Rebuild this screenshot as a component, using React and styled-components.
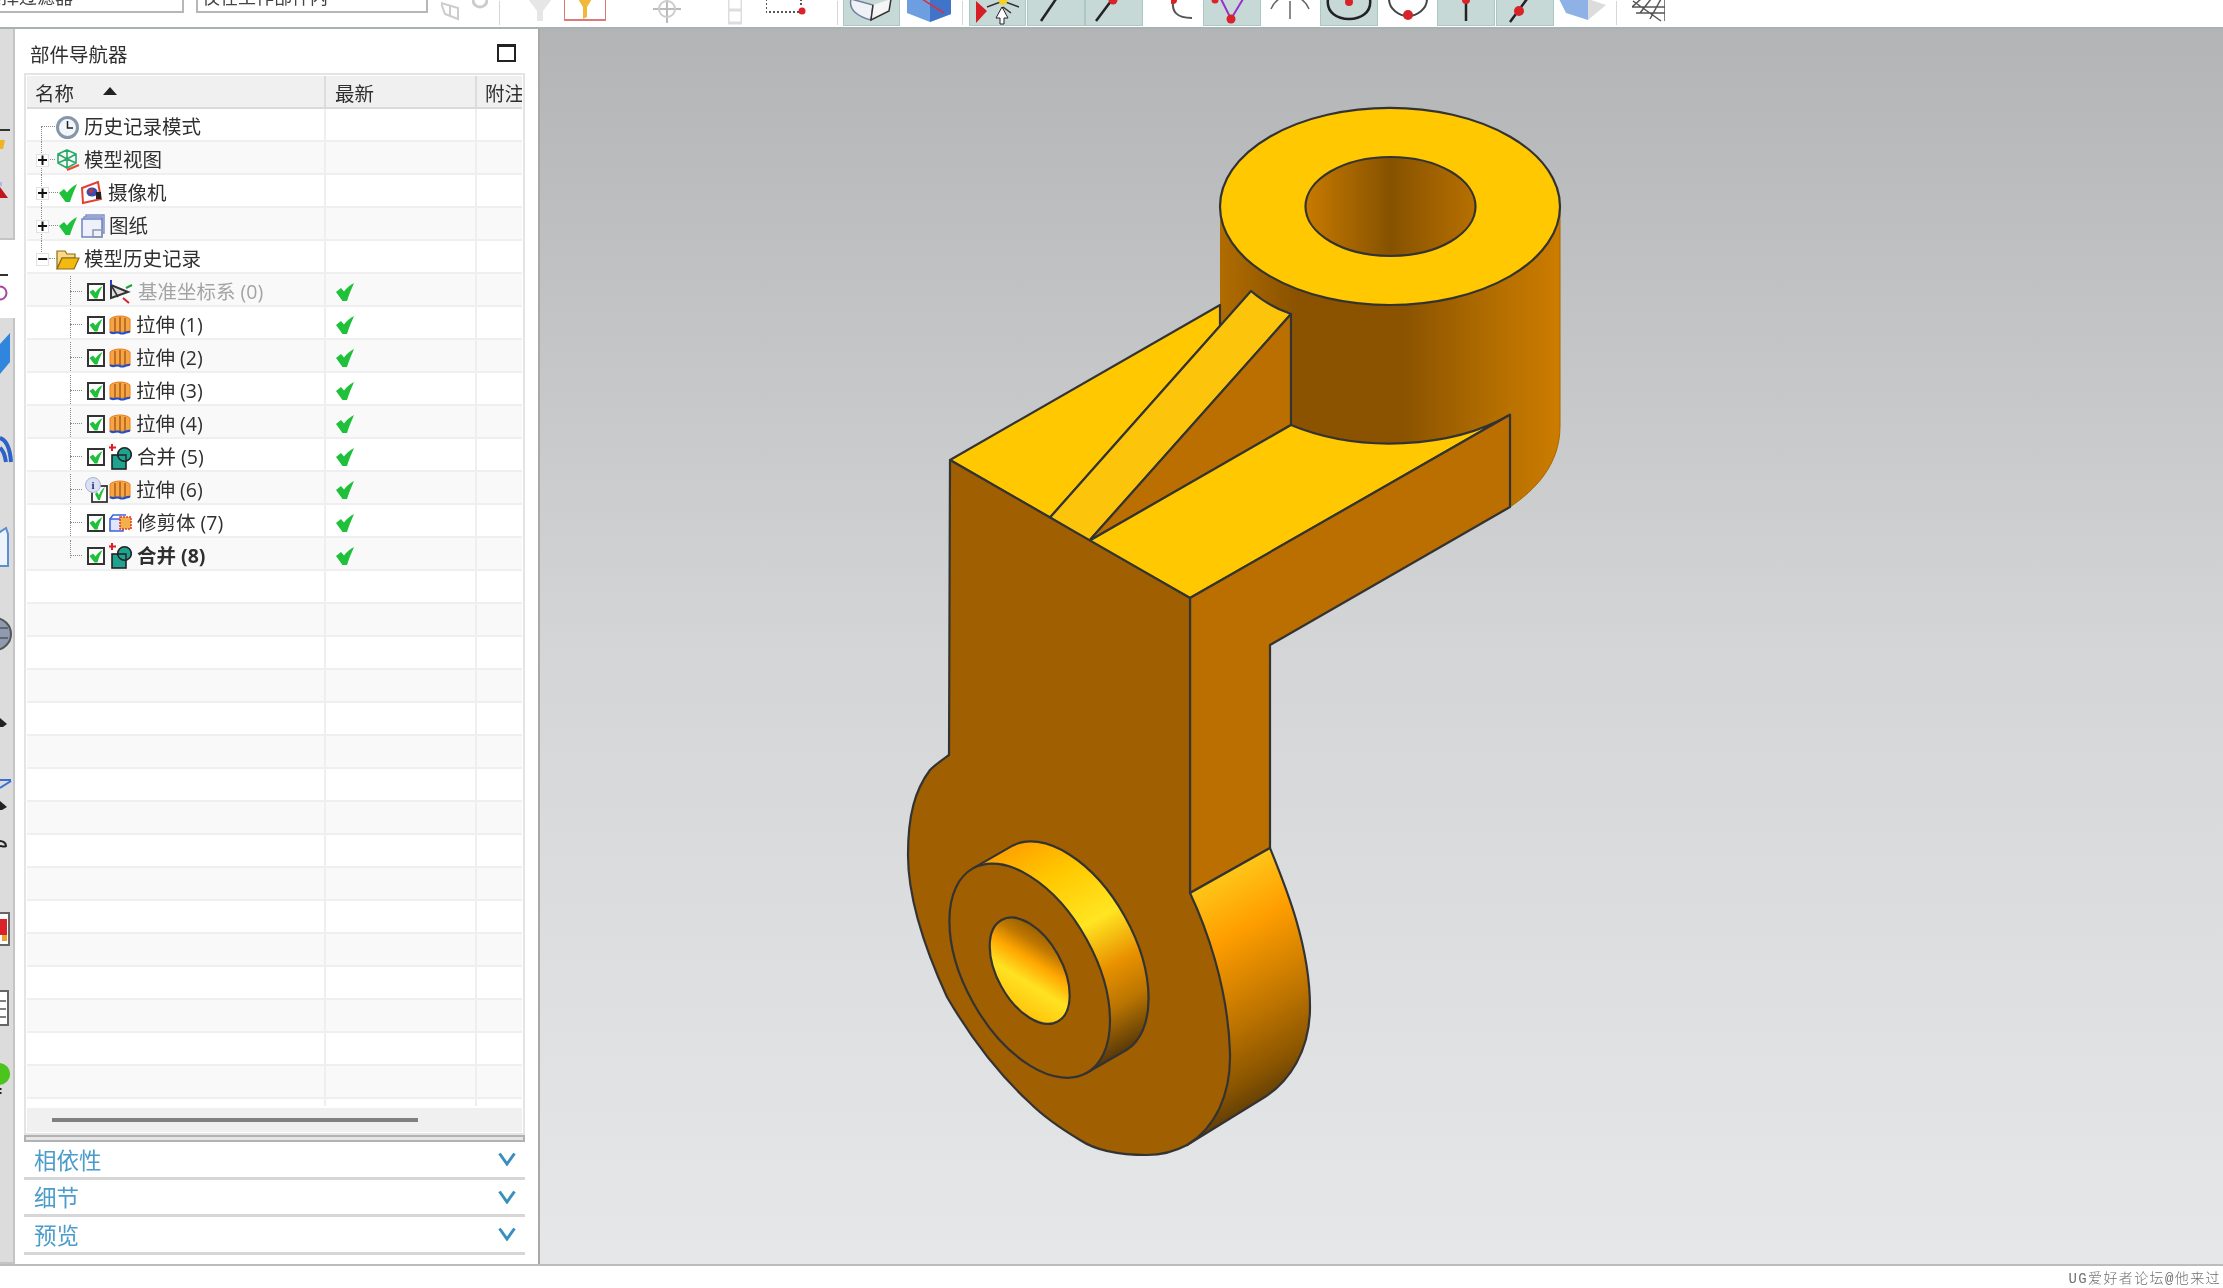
import React from "react";
import styled, { createGlobalStyle } from "styled-components";

const CJK = `"Open Sans", "Noto Sans CJK SC", sans-serif`;

const GlobalStyle = createGlobalStyle`
  html, body {
    margin: 0;
    padding: 0;
    background: #fff;
    overflow: hidden;
  }
  * {
    box-sizing: border-box;
  }
`;

const Page = styled.div`
  width: 2223px;
  height: 1288px;
  display: flex;
  flex-direction: column;
  overflow: hidden;
  font-family: ${CJK};
  background: #fff;
  filter: blur(0.45px);
`;

/* ---------- top toolbar, cut off by the top of the picture ---------- */

const Toolbar = styled.div`
  height: 29px;
  flex: none;
  display: flex;
  align-items: flex-end;
  background: #fff;
  border-bottom: 2px solid #a7b3b3;
  overflow: hidden;
`;

const Combo = styled.div`
  flex: none;
  width: ${(p) => p.$w}px;
  height: 34px;
  margin-left: ${(p) => p.$ml}px;
  margin-bottom: 14px;
  padding: 0 10px 0 4px;
  display: flex;
  align-items: center;
  justify-content: space-between;
  border: 2px solid #b4b8b8;
  background: #fff;
  color: #444;
  font-size: 18px;
  white-space: nowrap;
`;

const ComboCaret = styled.span`
  width: 0;
  height: 0;
  border-left: 4px solid transparent;
  border-right: 4px solid transparent;
  border-top: 4px solid #777;
`;

const ToolButton = styled.div`
  flex: none;
  width: ${(p) => p.$w}px;
  height: 26px;
  margin-left: ${(p) => p.$ml}px;
  margin-bottom: 1px;
  background: ${(p) => (p.$on ? "#c7d9d6" : "transparent")};
  border: 1px solid ${(p) => (p.$on ? "#adc8c4" : "transparent")};
  border-top: none;
  overflow: hidden;
  display: flex;
  justify-content: center;
  align-items: flex-end;
  svg {
    display: block;
    flex: none;
  }
`;

const ToolSep = styled.div`
  flex: none;
  width: 1px;
  height: 24px;
  margin-left: ${(p) => p.$ml}px;
  margin-bottom: 2px;
  background: #d6d6d6;
`;

const Glyph = ({ w, children }) => (
  <svg width={w} height="26" viewBox={`0 0 ${w} 26`} fill="none">
    {children}
  </svg>
);

const toolItems = [
  { w: 26, ml: 12, draw: <Glyph w={26}><path d="M1 4 18 9V20L5 15Z M10 7V18" stroke="#ccc" strokeWidth="2" /></Glyph> },
  { w: 18, ml: 5, draw: <Glyph w={18}><circle cx="9" cy="1" r="7" stroke="#ccc" strokeWidth="3" /></Glyph> },
  { sep: true, ml: 10 },
  { w: 26, ml: 27, draw: <Glyph w={26}><path d="M1 0H25L16 12V22H10V12Z" fill="#e6e6e6" /></Glyph> },
  { w: 44, ml: 10, draw: <Glyph w={44}><path d="M1 0V21H43V0" stroke="#dc7a7a" strokeWidth="2" /><path d="M15 0H29L24 8V18L20 20V8Z" fill="#f0b93a" /></Glyph> },
  { w: 36, ml: 42, draw: <Glyph w={36}><path d="M18 0V24M4 10H32" stroke="#bbb" strokeWidth="2" /><circle cx="18" cy="10" r="8" stroke="#ccc" strokeWidth="2" /></Glyph> },
  { w: 16, ml: 42, draw: <Glyph w={16}><path d="M1 0V24H15V0M1 11H15" stroke="#ddd" strokeWidth="3" /></Glyph> },
  { w: 42, ml: 22, draw: <Glyph w={42}><path d="M1 0V13H36M36 0V8" stroke="#555" strokeWidth="2" strokeDasharray="2 2" /><circle cx="37" cy="12" r="3.5" fill="#d8232a" /></Glyph> },
  { sep: true, ml: 30 },
  { w: 57, ml: 5, on: true, draw: <Glyph w={57}><path d="M8 0 C6 8 10 16 28 21 L30 6 Z" fill="#eef1f6" stroke="#6f7f9f" strokeWidth="1.5" /><path d="M30 6 28 21 46 12 48 0" fill="#f5f5f5" stroke="#333" strokeWidth="1.5" /></Glyph> },
  { w: 46, ml: 6, draw: <Glyph w={46}><path d="M1 0H45V15L24 23 1 14Z" fill="#6d9fe0" /><path d="M24 0H45V15L24 23Z" fill="#3f74c8" /><path d="M16 0 38 14" stroke="#d8323a" strokeWidth="1.5" /></Glyph> },
  { sep: true, ml: 10 },
  { w: 57, ml: 6, on: true, draw: <Glyph w={57}><path d="M7 2 18 12 7 24Z" fill="#d41f26" /><path d="M18 8 34 2 50 8M34 8 30 16M34 8 42 14" stroke="#333" strokeWidth="1.5" /><circle cx="34" cy="2" r="4" fill="#f5d21f" /><path d="M33 8 39 19H35V25H31V19H27Z" fill="#fff" stroke="#222" /></Glyph> },
  { w: 58, ml: 1, on: true, draw: <Glyph w={58}><path d="M14 22 29 0" stroke="#222" strokeWidth="2.5" /></Glyph> },
  { w: 58, ml: 0, on: true, draw: <Glyph w={58}><path d="M11 22 26 2" stroke="#222" strokeWidth="2.5" /><circle cx="28" cy="1" r="4.5" fill="#d8232a" /></Glyph> },
  { w: 24, ml: 27, draw: <Glyph w={24}><path d="M3 3C2 12 6 19 22 19" stroke="#555" strokeWidth="2" /><circle cx="3" cy="1" r="4" fill="#d8232a" /></Glyph> },
  { w: 58, ml: 9, on: true, draw: <Glyph w={58}><path d="M18 0 28 20 40 0" stroke="#9a2fc9" strokeWidth="2" /><circle cx="28" cy="20" r="4.5" fill="#d8232a" /><circle cx="12" cy="1" r="3.5" fill="#d8232a" /></Glyph> },
  { w: 46, ml: 6, draw: <Glyph w={46}><path d="M23 2V20M4 10C6 5 9 2 12 0M42 10C40 5 37 2 34 0" stroke="#666" strokeWidth="1.5" /></Glyph> },
  { w: 58, ml: 7, on: true, draw: <Glyph w={58}><path d="M8 0C6 14 18 20 29 20C40 20 52 14 50 0" stroke="#222" strokeWidth="2.5" /><circle cx="29" cy="3" r="4" fill="#d8232a" /></Glyph> },
  { w: 46, ml: 7, draw: <Glyph w={46}><path d="M4 0C4 10 14 17 23 17C32 17 42 10 42 0" stroke="#444" strokeWidth="2" /><circle cx="23" cy="16" r="5" fill="#d8232a" /></Glyph> },
  { w: 58, ml: 6, on: true, draw: <Glyph w={58}><path d="M29 2V22" stroke="#222" strokeWidth="2.5" /><circle cx="29" cy="1" r="4" fill="#d8232a" /></Glyph> },
  { w: 58, ml: 1, on: true, draw: <Glyph w={58}><path d="M14 23 31 0" stroke="#222" strokeWidth="2.5" /><circle cx="23" cy="12" r="5" fill="#d8232a" /></Glyph> },
  { w: 49, ml: 4, draw: <Glyph w={49}><path d="M1 0H30L48 6 30 21Z" fill="#dcdcdc" /><path d="M1 0H30V21L8 14Z" fill="#8fb2e6" /></Glyph> },
  { sep: true, ml: 9 },
  { w: 35, ml: 14, draw: <Glyph w={35}><path d="M2 2 30 22M34 0V22M10 0 1 8M20 0 9 14M30 0 19 20M1 8 34 8M5 14 34 14" stroke="#555" strokeWidth="1.5" /></Glyph> },
];

/* ---------- narrow icon strip left of the navigator ---------- */

const Main = styled.div`
  flex: 1;
  min-height: 0;
  display: flex;
`;

const Strip = styled.div`
  width: 15px;
  flex: none;
  display: flex;
  flex-direction: column;
  background: #fff;
`;

const StripGroup = styled.div`
  flex: ${(p) => (p.$grow ? "1" : "none")};
  height: ${(p) => (p.$h ? `${p.$h}px` : "auto")};
  margin-top: ${(p) => p.$mt || 0}px;
  display: flex;
  flex-direction: column;
  background: #dcdcdc;
  border-right: 2px solid #c4c4c4;
  border-bottom: 2px solid #c4c4c4;
  overflow: hidden;
`;

const StripSlot = styled.div`
  flex: none;
  margin-top: ${(p) => p.$mt}px;
  svg {
    display: block;
  }
`;

const StripRule = styled.div`
  flex: none;
  width: ${(p) => p.$w}px;
  height: 2px;
  margin-top: ${(p) => p.$mt}px;
  background: #333;
`;

const StripGap = styled.div`
  height: 78px;
  flex: none;
  padding-top: 34px;
`;

/* ---------- part navigator ---------- */

const Panel = styled.div`
  width: 525px;
  flex: none;
  display: flex;
  flex-direction: column;
  background: #fff;
  border-right: 2px solid #a8a8a8;
  padding-left: 9px;
`;

const PanelHead = styled.div`
  height: 44px;
  flex: none;
  display: flex;
  align-items: center;
  justify-content: space-between;
  padding: 4px 9px 0 6px;
  width: 501px;
`;

const PanelTitle = styled.span`
  font-size: 19.5px;
  color: #2f2f2f;
`;

const MaxBox = styled.span`
  width: 19px;
  height: 18px;
  border: 2px solid #222;
  border-top-width: 3px;
`;

const TreeBox = styled.div`
  width: 501px;
  height: 1062px;
  flex: none;
  display: flex;
  flex-direction: column;
  border: 2px solid #e4e4e4;
  padding: 1px;
`;

const columns = "299px 151px 45px";

const TreeHead = styled.div`
  height: 33px;
  flex: none;
  display: grid;
  grid-template-columns: ${columns};
  background: #f0f0f0;
  border-bottom: 2px solid #dadada;
`;

const HeadCell = styled.div`
  display: flex;
  align-items: center;
  padding: 2px 0 0 ${(p) => p.$pl}px;
  font-size: 19.5px;
  color: #2f2f2f;
  white-space: nowrap;
  overflow: hidden;
  border-right: ${(p) => (p.$last ? "none" : "2px solid #dcdcdc")};
`;

const SortArrow = styled.span`
  width: 0;
  height: 0;
  margin-left: 29px;
  margin-top: -3px;
  border-left: 7px solid transparent;
  border-right: 7px solid transparent;
  border-bottom: 8px solid #222;
`;

const TreeBody = styled.div`
  height: 997px;
  margin-bottom: 2px;
  flex: none;
  overflow: hidden;
`;

const Row = styled.div`
  height: 33px;
  display: grid;
  grid-template-columns: ${columns};
  background: ${(p) => (p.$odd ? "#fff" : "#f9f9f9")};
  border-bottom: 2px solid #efefef;
`;

const Cell = styled.div`
  position: relative;
  display: flex;
  align-items: center;
  padding: 3px 0 0 ${(p) => p.$pl || 0}px;
  border-right: ${(p) => (p.$last ? "none" : "2px solid #efefef")};
  svg {
    display: block;
    flex: none;
  }
`;

const GuideV = styled.span`
  position: absolute;
  left: ${(p) => p.$x}px;
  top: ${(p) => p.$top}px;
  bottom: ${(p) => p.$bottom}px;
  border-left: 1px dotted #8a8a8a;
`;

const GuideH = styled.span`
  position: absolute;
  left: ${(p) => p.$x}px;
  width: ${(p) => p.$w}px;
  top: 17px;
  border-top: 1px dotted #8a8a8a;
`;

const Expander = styled.span`
  position: relative;
  width: 13px;
  height: 13px;
  flex: none;
  background: #fff;
  border: 1px solid #e2e2e2;
  color: #111;
  font-size: 18px;
  font-family: "Liberation Sans", sans-serif;
  font-weight: 700;
  line-height: 10px;
  text-align: center;
`;

const ExpanderSpace = styled.span`
  width: 13px;
  flex: none;
`;

const Slot = styled.span`
  flex: none;
  margin-left: ${(p) => p.$ml}px;
  svg {
    display: block;
  }
`;

const Label = styled.span`
  margin-left: ${(p) => p.$ml}px;
  font-size: 19.5px;
  line-height: 30px;
  white-space: nowrap;
  color: ${(p) => (p.$dim ? "#a4a4a4" : "#2f2f2f")};
  font-weight: ${(p) => (p.$bold ? 700 : 400)};
`;

const ScrollTrack = styled.div`
  height: 24px;
  flex: none;
  background: #f0f0f0;
  padding: 10px 0 0 25px;
`;

const ScrollThumb = styled.div`
  width: 366px;
  height: 4px;
  background: #808080;
`;

const Splitter = styled.div`
  width: 501px;
  height: 7px;
  flex: none;
  background: #e6e6e6;
  border: 2px solid #b2b2b2;
`;

const Section = styled.div`
  width: 501px;
  height: 37.5px;
  flex: none;
  display: flex;
  align-items: center;
  justify-content: space-between;
  padding: 1px 9px 1px 10px;
  border-bottom: 3px solid #d6d6d6;
  color: #4a9ccb;
  font-size: 22.5px;
`;

/* ---------- graphics window ---------- */

const Viewport = styled.div`
  flex: 1;
  min-width: 0;
  background: linear-gradient(180deg, #b3b4b6 0%, #d3d5d7 50%, #e6e7e9 100%);
  svg {
    display: block;
    width: 100%;
    height: 100%;
  }
`;

const StatusBar = styled.div`
  height: 24px;
  flex: none;
  display: flex;
  align-items: center;
  justify-content: flex-end;
  padding-right: 2px;
  background: #fff;
  border-top: 2px solid #bcbcbc;
  color: #707070;
  font-family: "Liberation Mono", "Noto Sans CJK SC", monospace;
  font-size: 14px;
  font-weight: 300;
  letter-spacing: 1.4px;
  white-space: nowrap;
`;

/* ---------- tree icons ---------- */

const Tick = ({ size = 18 }) => (
  <svg width={size} height={size} viewBox="0 0 18 18">
    <path d="M0 9 5 5 8 8.5C10.5 5 14 2 18 0 16 5 13 11 11 18H6.5Z" fill="#1fc03a" />
  </svg>
);

const CheckBox = () => (
  <svg width="18" height="18" viewBox="0 0 18 18">
    <rect x="1" y="1" width="16" height="16" fill="#fff" stroke="#333" strokeWidth="2" />
    <path d="M2.5 9 6 6.5 8.5 9.5C10 7 12 5 15.5 3 13.5 7 11.5 11 10.5 15.5H7.5Z" fill="#1fc03a" />
  </svg>
);

const ClockIcon = () => (
  <svg width="23" height="23" viewBox="0 0 23 23">
    <circle cx="11.5" cy="11.5" r="10" fill="#f2f5fa" stroke="#8496aa" strokeWidth="3" />
    <path d="M11.5 5V12H17" fill="none" stroke="#222" strokeWidth="1.5" />
  </svg>
);

const ViewIcon = () => (
  <svg width="24" height="24" viewBox="0 0 24 24" fill="none">
    <path d="M11 2 20 6V15L11 20 2 15V6ZM2 6 11 11 20 6M11 11V20M2 15 11 11 20 15M11 2V11" stroke="#2aa868" strokeWidth="1.6" />
    <path d="M11 22 23 17" stroke="#ea4b2c" strokeWidth="2.2" />
  </svg>
);

const CameraIcon = () => (
  <svg width="22" height="24" viewBox="0 0 22 24" fill="none">
    <path d="M1 7 17 1 20 18 2 22Z" fill="#fff" stroke="#e2402e" strokeWidth="2" />
    <ellipse cx="11" cy="11" rx="5.5" ry="4.5" fill="#3f4ca8" />
    <circle cx="10" cy="10" r="2" fill="#c33" />
    <rect x="15" y="11" width="5" height="7" fill="#222" />
  </svg>
);

const SheetIcon = () => (
  <svg width="24" height="24" viewBox="0 0 24 24">
    <rect x="5" y="1" width="18" height="18" fill="#dfe6f5" stroke="#7f90c6" strokeWidth="1.5" />
    <rect x="3" y="3" width="18" height="18" fill="#e6ebf6" stroke="#7f90c6" strokeWidth="1.5" />
    <rect x="1" y="5" width="20" height="18" fill="#eef1f9" stroke="#6f82c0" strokeWidth="1.5" />
    <rect x="12" y="16" width="9" height="7" fill="none" stroke="#8d96b2" strokeWidth="1.5" />
  </svg>
);

const FolderIcon = () => (
  <svg width="24" height="22" viewBox="0 0 24 22">
    <path d="M1 21V3H9L11 6H19V10H6Z" fill="#f8d985" stroke="#8f6a1a" strokeWidth="1.2" />
    <path d="M1 21 6 10H23L18 21Z" fill="#f2b90f" stroke="#8f6a1a" strokeWidth="1.2" />
  </svg>
);

const DatumIcon = () => (
  <svg width="24" height="26" viewBox="0 0 24 26" fill="none">
    <path d="M2 6V19L19 13Z" fill="#ddd" stroke="#333" strokeWidth="2" />
    <path d="M2 6 9 18" stroke="#333" strokeWidth="1.6" />
    <path d="M2 6V1" stroke="#2a3fd0" strokeWidth="2" />
    <path d="M17 9 23 6" stroke="#1f9e3a" strokeWidth="2" />
    <path d="M14 19 20 24" stroke="#d8232a" strokeWidth="2" />
  </svg>
);

const ExtrudeIcon = () => (
  <svg width="22" height="22" viewBox="0 0 22 22" fill="none">
    <path d="M1 5C5 1 17 1 21 5V18H1Z" fill="#f7a544" stroke="#e8801e" />
    <path d="M6 4V18M11 3V18M16 4V18" stroke="#a85f18" strokeWidth="1.5" />
    <path d="M1 18C4 21 8 17 11 19 14 21 18 17 21 18" stroke="#2350c8" strokeWidth="2.2" />
  </svg>
);

const UniteIcon = () => (
  <svg width="23" height="26" viewBox="0 0 23 26" fill="none">
    <path d="M3 0V7M0 3.5H7" stroke="#e01b24" strokeWidth="2" />
    <rect x="3" y="11" width="14" height="14" fill="#1fa391" stroke="#222" strokeWidth="1.6" />
    <circle cx="15.5" cy="10.5" r="6.8" fill="#1fa391" stroke="#222" strokeWidth="1.6" />
    <path d="M9 11H17V17" stroke="#222" strokeWidth="1.4" />
  </svg>
);

const TrimIcon = () => (
  <svg width="23" height="18" viewBox="0 0 23 18" fill="none">
    <path d="M1 5H14V17H1Z" fill="#dfe6fb" stroke="#3d63e0" strokeWidth="1.6" />
    <path d="M1 5 4 1H17" stroke="#3d63e0" strokeWidth="1.6" />
    <path d="M11 3H22V15H11Z" fill="#f3b04a" stroke="#e0432b" strokeWidth="1.6" strokeDasharray="2 1" />
  </svg>
);

const InfoCheck = () => (
  <svg width="24" height="26" viewBox="0 0 24 26" fill="none">
    <rect x="8" y="9" width="15" height="16" fill="#fff" stroke="#333" strokeWidth="1.8" />
    <path d="M11 17 13 15 15 18C16 15 18 12 21 10 19 14 17 19 16 23H14Z" fill="#1fc03a" />
    <circle cx="9" cy="8" r="7.5" fill="#dbe0f2" stroke="#a9b1d4" />
    <text x="9" y="12" fontSize="11" fontWeight="700" fontFamily="Liberation Serif, serif" fill="#1d2f86" textAnchor="middle">i</text>
  </svg>
);

const Chevron = () => (
  <svg width="18" height="14" viewBox="0 0 18 14" fill="none">
    <path d="M1.5 1.5 9 12 16.5 1.5" stroke="#3a8fbe" strokeWidth="3" />
  </svg>
);

/* ---------- tree data ---------- */

const topRows = [
  { name: "历史记录模式", icon: <ClockIcon />, iconMl: 7, labelMl: 5, first: true },
  { name: "模型视图", icon: <ViewIcon />, iconMl: 7, labelMl: 4, expand: "+" },
  { name: "摄像机", icon: <CameraIcon />, iconMl: 4, labelMl: 5, expand: "+", check: true },
  { name: "图纸", icon: <SheetIcon />, iconMl: 4, labelMl: 4, expand: "+", check: true },
  { name: "模型历史记录", icon: <FolderIcon />, iconMl: 7, labelMl: 4, expand: "−", last: true },
];

const featureRows = [
  { name: "基准坐标系 (0)", icon: <DatumIcon />, dim: true },
  { name: "拉伸 (1)", icon: <ExtrudeIcon /> },
  { name: "拉伸 (2)", icon: <ExtrudeIcon /> },
  { name: "拉伸 (3)", icon: <ExtrudeIcon /> },
  { name: "拉伸 (4)", icon: <ExtrudeIcon /> },
  { name: "合并 (5)", icon: <UniteIcon /> },
  { name: "拉伸 (6)", icon: <ExtrudeIcon />, info: true },
  { name: "修剪体 (7)", icon: <TrimIcon /> },
  { name: "合并 (8)", icon: <UniteIcon />, bold: true, end: true },
];

const TopRow = ({ row, odd }) => (
  <Row $odd={odd}>
    <Cell $pl={9}>
      <GuideV $x={14} $top={row.first ? 17 : 0} $bottom={row.last ? 22 : 0} />
      {row.last ? <GuideH $x={22} $w={8} /> : <GuideH $x={14} $w={row.check ? 17 : 14} />}
      {row.expand ? <Expander>{row.expand}</Expander> : <ExpanderSpace />}
      {row.check && (
        <Slot $ml={10}>
          <Tick />
        </Slot>
      )}
      <Slot $ml={row.iconMl}>{row.icon}</Slot>
      <Label $ml={row.labelMl}>{row.name}</Label>
    </Cell>
    <Cell />
    <Cell $last />
  </Row>
);

const FeatureRow = ({ row, odd }) => (
  <Row $odd={odd}>
    <Cell $pl={row.info ? 57 : 60}>
      <GuideV $x={43} $top={2} $bottom={row.end ? 13 : 2} />
      <GuideH $x={43} $w={12} />
      {row.info ? <InfoCheck /> : <CheckBox />}
      <Slot $ml={row.info ? 1 : 4}>{row.icon}</Slot>
      <Label $ml={5} $dim={row.dim} $bold={row.bold}>
        {row.name}
      </Label>
    </Cell>
    <Cell $pl={10}>
      <Tick />
    </Cell>
    <Cell $last />
  </Row>
);

const EmptyRow = ({ odd }) => (
  <Row $odd={odd}>
    <Cell />
    <Cell />
    <Cell $last />
  </Row>
);

/* ---------- the part in the graphics window, in page coordinates ---------- */

const PartModel = () => (
  <svg viewBox="540 29 1683 1235">
    <defs>
      <linearGradient id="barrel" gradientUnits="userSpaceOnUse" x1="1220" y1="0" x2="1560" y2="0">
        <stop offset="0" stopColor="#b06c00" />
        <stop offset="0.22" stopColor="#8b5300" />
        <stop offset="0.54" stopColor="#8b5300" />
        <stop offset="0.82" stopColor="#b56f00" />
        <stop offset="1" stopColor="#cc7c00" />
      </linearGradient>
      <linearGradient id="bore" gradientUnits="userSpaceOnUse" x1="1305" y1="0" x2="1476" y2="0">
        <stop offset="0" stopColor="#c87a00" />
        <stop offset="0.5" stopColor="#865200" />
        <stop offset="1" stopColor="#b87000" />
      </linearGradient>
      <linearGradient id="lobe" gradientUnits="userSpaceOnUse" x1="1230" y1="870" x2="1340" y2="1066">
        <stop offset="0" stopColor="#ffc618" />
        <stop offset="0.25" stopColor="#ff9e00" />
        <stop offset="0.6" stopColor="#c07500" />
        <stop offset="0.85" stopColor="#8a5500" />
        <stop offset="1" stopColor="#5a3a08" />
      </linearGradient>
      <linearGradient id="hub" gradientUnits="userSpaceOnUse" x1="1013" y1="845" x2="1126" y2="1050">
        <stop offset="0" stopColor="#ffa200" />
        <stop offset="0.2" stopColor="#ffc800" />
        <stop offset="0.45" stopColor="#ffe522" />
        <stop offset="0.65" stopColor="#ea9200" />
        <stop offset="0.82" stopColor="#b97400" />
        <stop offset="1" stopColor="#5a3a08" />
      </linearGradient>
      <linearGradient id="hole" gradientUnits="userSpaceOnUse" x1="1001" y1="920" x2="1058" y2="1021">
        <stop offset="0" stopColor="#6a4400" />
        <stop offset="0.28" stopColor="#c07800" />
        <stop offset="0.42" stopColor="#ffa600" />
        <stop offset="0.6" stopColor="#ffe222" />
        <stop offset="1" stopColor="#ffb400" />
      </linearGradient>
    </defs>
    <g stroke="#333" strokeWidth="2.2" strokeLinejoin="round">
      <path d="M1220 206V340L1291 440 1510 507C1535 490 1560 465 1560 426V206Z" fill="url(#barrel)" stroke="none" />
      <path d="M1560 206V426C1560 465 1535 490 1510 507" fill="none" stroke="#a86600" strokeWidth="1" />
      <path d="M950 460 1220 305V326L1050 517.5Z" fill="#ffc800" />
      <path d="M1050 517.5 1251 291Q1268 306 1291 314L1089 541Z" fill="#fdc40c" />
      <path d="M1291 314V425L1089 541Z" fill="#bb6f00" />
      <path d="M1089 541 1291 425A170 98.6 0 0 0 1510 414.8L1190 598Z" fill="#ffc800" />
      <path d="M1190 598 1510 414.8V507L1270 645V848L1190 893Z" fill="#bb6f00" />
      <ellipse cx="1390" cy="206.4" rx="170" ry="98.6" fill="#ffc800" />
      <ellipse cx="1390.5" cy="206.5" rx="85" ry="49.5" fill="url(#bore)" />
      <path d="M1190 893 1270 848C1285 885 1310 945 1310 1007 1310 1050 1290 1083 1260 1100L1187 1145Z" fill="url(#lobe)" />
      <path
        d="M950 460 1190 598V893C1205 925 1228 985 1230 1053 1231 1095 1215 1128 1187 1145 1172 1153 1160 1155 1147 1155 1120 1155 1095 1150 1080 1140 1060 1128 1045 1118 1030 1103 1005 1080 975 1045 947 997 930 960 908 905 908 855 908 815 915 790 930 770 936 764 942 760 949 755Z"
        fill="#a05f00"
      />
      <path d="M973 868.4 1013 845.4A117 65 61 0 1 1126.4 1050L1086.4 1073Z" fill="url(#hub)" />
      <ellipse cx="1029.7" cy="970.7" rx="117" ry="65" transform="rotate(61 1029.7 970.7)" fill="#a05f00" />
      <ellipse cx="1029.7" cy="970.7" rx="58" ry="32.5" transform="rotate(61 1029.7 970.7)" fill="url(#hole)" />
    </g>
  </svg>
);

const App = () => {
  const blanks = Array.from({ length: 17 });
  return (
    <Page>
      <GlobalStyle />
      <Toolbar>
        <Combo $w={243} $ml={-59}>
          <span>没有选择过滤器</span>
          <ComboCaret />
        </Combo>
        <Combo $w={232} $ml={12}>
          <span>仅在工作部件内</span>
          <ComboCaret />
        </Combo>
        {toolItems.map((item, i) =>
          item.sep ? (
            <ToolSep key={i} $ml={item.ml} />
          ) : (
            <ToolButton key={i} $w={item.w} $ml={item.ml} $on={item.on}>
              {item.draw}
            </ToolButton>
          )
        )}
      </Toolbar>
      <Main>
        <Strip>
          <StripGroup $h={211}>
            <StripRule $w={10} $mt={100} />
            <StripSlot $mt={7}>
              <svg width="13" height="12" viewBox="0 0 13 12"><path d="M0 2H5L3 11H0Z" fill="#eeb422" /></svg>
            </StripSlot>
            <StripSlot $mt={32}>
              <svg width="13" height="18" viewBox="0 0 13 18"><path d="M0 0H2V4H0Z" fill="#b7b4e6" /><path d="M0 5 8 16H0Z" fill="#c4141c" /></svg>
            </StripSlot>
          </StripGroup>
          <StripGap>
            <StripRule $w={8} $mt={0} />
            <svg width="8" height="20" viewBox="0 0 8 20" style={{ display: "block", marginTop: 8 }}>
              <circle cx="0" cy="9" r="6.5" fill="none" stroke="#a8459c" strokeWidth="2" />
            </svg>
          </StripGap>
          <StripGroup $grow>
            <StripSlot $mt={14}>
              <svg width="13" height="44" viewBox="0 0 13 44"><path d="M0 12 10 1V30L0 42Z" fill="#2f86dc" /></svg>
            </StripSlot>
            <StripSlot $mt={54}>
              <svg width="13" height="34" viewBox="0 0 13 34" fill="none"><path d="M0 8C6 10 10 18 11 32M0 18C3 20 5 26 6 32" stroke="#2d63c8" strokeWidth="4" /></svg>
            </StripSlot>
            <StripSlot $mt={62}>
              <svg width="13" height="42" viewBox="0 0 13 42" fill="none"><path d="M-3 8 6 2 8 8V40H-3Z" fill="#eef4fc" stroke="#5d8ed0" strokeWidth="2" /></svg>
            </StripSlot>
            <StripSlot $mt={48}>
              <svg width="13" height="36" viewBox="0 0 13 36"><circle cx="-5" cy="18" r="16" fill="#8f9ab0" stroke="#555" strokeWidth="2" /><path d="M0 12H8M0 22H8" stroke="#333" /></svg>
            </StripSlot>
            <StripSlot $mt={65}>
              <svg width="13" height="12" viewBox="0 0 13 12"><path d="M0 1 7 7 3 10H0Z" fill="#222" /></svg>
            </StripSlot>
            <StripSlot $mt={46}>
              <svg width="13" height="38" viewBox="0 0 13 38" fill="none"><path d="M0 5H11M11 6 0 13" stroke="#3a6fd8" strokeWidth="2" /><path d="M0 26 7 32 2 35H0Z" fill="#222" /></svg>
            </StripSlot>
            <StripSlot $mt={25}>
              <svg width="13" height="12" viewBox="0 0 13 12" fill="none"><path d="M0 3C3 3 6 5 6 8 4 9 2 8 0 8" stroke="#222" strokeWidth="2" /></svg>
            </StripSlot>
            <StripSlot $mt={61}>
              <svg width="13" height="36" viewBox="0 0 13 36"><rect x="-4" y="2" width="13" height="32" fill="#fff" stroke="#666" strokeWidth="2" /><rect x="0" y="8" width="7" height="16" fill="#d8232a" /><rect x="2" y="24" width="5" height="6" fill="#f0a030" /></svg>
            </StripSlot>
            <StripSlot $mt={42}>
              <svg width="13" height="38" viewBox="0 0 13 38" fill="none"><rect x="-4" y="2" width="12" height="34" fill="#fff" stroke="#666" strokeWidth="2" /><path d="M0 12H6M0 20H6M0 28H6" stroke="#555" strokeWidth="1.5" /></svg>
            </StripSlot>
            <StripSlot $mt={35}>
              <svg width="13" height="34" viewBox="0 0 13 34"><circle cx="-1" cy="12" r="11" fill="#4cc41e" /><path d="M0 26V34" stroke="#222" strokeWidth="3" strokeDasharray="2 2" /></svg>
            </StripSlot>
          </StripGroup>
        </Strip>
        <Panel>
          <PanelHead>
            <PanelTitle>部件导航器</PanelTitle>
            <MaxBox />
          </PanelHead>
          <TreeBox>
            <TreeHead>
              <HeadCell $pl={8}>
                名称
                <SortArrow />
              </HeadCell>
              <HeadCell $pl={9}>最新</HeadCell>
              <HeadCell $pl={8} $last>
                附注
              </HeadCell>
            </TreeHead>
            <TreeBody>
              {topRows.map((row, i) => (
                <TopRow key={row.name} row={row} odd={i % 2 === 0} />
              ))}
              {featureRows.map((row, i) => (
                <FeatureRow key={row.name} row={row} odd={(i + 5) % 2 === 0} />
              ))}
              {blanks.map((_, i) => (
                <EmptyRow key={i} odd={(i + 14) % 2 === 0} />
              ))}
            </TreeBody>
            <ScrollTrack>
              <ScrollThumb />
            </ScrollTrack>
          </TreeBox>
          <Splitter />
          <Section>
            相依性
            <Chevron />
          </Section>
          <Section>
            细节
            <Chevron />
          </Section>
          <Section>
            预览
            <Chevron />
          </Section>
        </Panel>
        <Viewport>
          <PartModel />
        </Viewport>
      </Main>
      <StatusBar>UG爱好者论坛@他来过</StatusBar>
    </Page>
  );
};

export default App;
